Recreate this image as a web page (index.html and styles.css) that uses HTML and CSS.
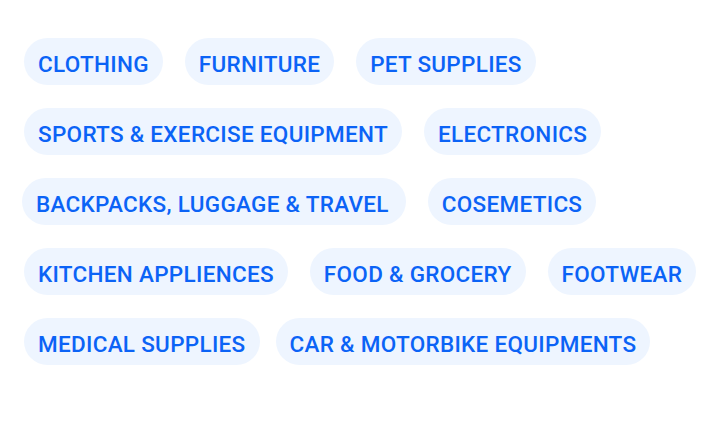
FILE: index.html
```html
<!DOCTYPE html>
<html>
<head>
<meta charset="utf-8">
<link rel="stylesheet" href="styles.css">
</head>
<body>
<div class="tags">
  <span class="tag">CLOTHING</span>
  <span class="tag">FURNITURE</span>
  <span class="tag">PET SUPPLIES</span>
  <span class="tag">SPORTS &amp; EXERCISE EQUIPMENT</span>
  <span class="tag">ELECTRONICS</span>
  <span class="tag tag-shift">BACKPACKS, LUGGAGE &amp; TRAVEL</span>
  <span class="tag">COSEMETICS</span>
  <span class="tag">KITCHEN APPLIENCES</span>
  <span class="tag">FOOD &amp; GROCERY</span>
  <span class="tag">FOOTWEAR</span>
  <span class="tag">MEDICAL SUPPLIES</span>
  <span class="tag tag-close">CAR &amp; MOTORBIKE EQUIPMENTS</span>
</div>
</body>
</html>
```
FILE: styles.css
```css
html, body {
  margin: 0;
  padding: 0;
  background: #ffffff;
}
body {
  padding: 38px 12px 0 24px;
  font-family: Roboto, "Liberation Sans", sans-serif;
}
.tags {
  display: flex;
  flex-wrap: wrap;
  column-gap: 22px;
  row-gap: 23px;
}
.tag {
  display: inline-flex;
  align-items: center;
  height: 47px;
  padding: 4px 14px 0;
  border-radius: 24px;
  background: #eef5ff;
  color: #0b63f6;
  font-size: 22.5px;
  font-weight: 500;
  letter-spacing: 0.3px;
  white-space: nowrap;
  box-sizing: border-box;
}
.tag-shift {
  margin-left: -2px;
  padding-right: 17px;
}
.tag-close {
  margin-left: -6px;
}
```
